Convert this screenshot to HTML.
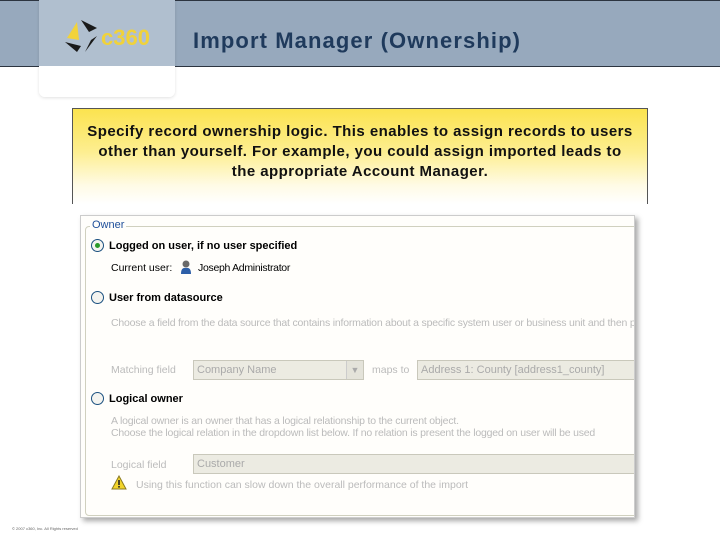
<!DOCTYPE html>
<html><head><meta charset="utf-8"><style>
*{margin:0;padding:0;box-sizing:border-box}
body{width:720px;height:540px;overflow:hidden;background:#fff;font-family:"Liberation Sans",sans-serif;position:relative}
.hdr{position:absolute;left:0;top:0;width:720px;height:67px;background:#97a9bd;border-bottom:1px solid #2c3440;border-top:1px solid #2c3440}
.logo{position:absolute;left:39px;top:0;width:136px;height:97px;border-radius:0 0 6px 6px;background:linear-gradient(#b0bfcf 0,#b0bfcf 66px,#fff 66px);box-shadow:0 1px 3px rgba(0,0,0,.12)}
.title{position:absolute;left:193px;top:28px;font-size:22px;letter-spacing:1.1px;font-weight:bold;color:#1f3a5c}
.yb{position:absolute;left:72px;top:108px;width:576px;height:96px;border:1px solid #555;border-bottom:none;background:linear-gradient(#fbe34f 0%,#fdee90 45%,#fffbe5 80%,#fff 100%);text-align:center;font-size:15px;font-weight:bold;line-height:20px;padding-top:13px;letter-spacing:.45px;color:#111}
.dlg{position:absolute;left:80px;top:215px;width:555px;height:303px;background:#fffefb;border:1px solid #ccc;box-shadow:3px 3px 5px rgba(0,0,0,.35);overflow:hidden;font-size:10.5px;color:#bbb}
.fs{position:absolute;left:4px;top:10px;width:560px;height:290px;border:1px solid #d0d0bf;border-radius:4px}
.lg{position:absolute;left:9px;top:3px;background:#fffefb;padding:0 2px;color:#1f4f9a;font-size:11px}
.a{position:absolute;white-space:nowrap}
.b{font-weight:bold;color:#000;font-size:11px}
.r{position:absolute;width:13px;height:13px;border-radius:50%;border:1px solid #1c5180;background:#f4f4f0}
.r.on::after{content:"";position:absolute;left:3px;top:3px;width:5px;height:5px;border-radius:50%;background:#2a9a2a}
.in{position:absolute;height:20px;background:#ecebe2;border:1px solid #c9c8bb;color:#aaa;padding:3px 3px;font-size:11px;white-space:nowrap}
</style></head><body>
<div class="hdr"></div>
<div class="logo">
<svg width="136" height="66" viewBox="0 0 136 66">
<polygon points="28,38 38,22 40,40" fill="#f2d33a"/>
<polygon points="42,20 58,28 50,32" fill="#1a1a1a"/>
<polygon points="26,42 38,52 42,46" fill="#1a1a1a"/>
<polygon points="58,36 46,52 52,40" fill="#1a1a1a"/>
<text x="62" y="45" font-family="Liberation Sans" font-size="22" font-weight="bold" fill="#f0d23a">c360</text>
</svg></div>
<div class="title">Import Manager (Ownership)</div>
<div class="yb">Specify record ownership logic. This enables to assign records to users<br>other than yourself. For example, you could assign imported leads to<br>the appropriate Account Manager.</div>
<div class="dlg">
<div class="fs"></div>
<div class="lg a">Owner</div>
<div class="r on" style="left:10px;top:23px"></div>
<div class="a b" style="left:28px;top:24px">Logged on user, if no user specified</div>
<div class="a" style="left:30px;top:46px;color:#000">Current user:</div>
<div class="a" style="left:99px;top:44px;width:12px;height:14px"><svg width="12" height="14"><circle cx="6" cy="4" r="3.5" fill="#6a6a6a"/><path d="M1 14 Q1 7 6 8 Q11 7 11 14Z" fill="#2d5fa8"/></svg></div>
<div class="a" style="left:117px;top:46px;color:#000;letter-spacing:-0.3px">Joseph Administrator</div>
<div class="r" style="left:10px;top:75px"></div>
<div class="a b" style="left:28px;top:76px">User from datasource</div>
<div class="a" style="left:30px;top:101px;letter-spacing:-0.2px">Choose a field from the data source that contains information about a specific system user or business unit and then pick</div>
<div class="a" style="left:30px;top:148px">Matching field</div>
<div class="in" style="left:112px;top:144px;width:171px">Company Name<span style="position:absolute;right:0;top:0;width:17px;height:18px;background:#e4e3da;border-left:1px solid #ccc;text-align:center;color:#aaa;font-size:9px;line-height:18px">▼</span></div>
<div class="a" style="left:291px;top:148px">maps to</div>
<div class="in" style="left:336px;top:144px;width:230px">Address 1: County [address1_county]</div>
<div class="r" style="left:10px;top:176px"></div>
<div class="a b" style="left:28px;top:177px">Logical owner</div>
<div class="a" style="left:30px;top:199px;letter-spacing:-0.2px">A logical owner is an owner that has a logical relationship to the current object.</div>
<div class="a" style="left:30px;top:211px;letter-spacing:-0.2px">Choose the logical relation in the dropdown list below. If no relation is present the logged on user will be used</div>
<div class="a" style="left:30px;top:243px">Logical field</div>
<div class="in" style="left:112px;top:238px;width:460px">Customer</div>
<div class="a" style="left:30px;top:259px"><svg width="16" height="15"><polygon points="8,1 15,14 1,14" fill="#f2d42a" stroke="#8a7a20"/><rect x="7.2" y="5" width="1.6" height="5" fill="#222"/><rect x="7.2" y="11" width="1.6" height="1.6" fill="#222"/></svg></div>
<div class="a" style="left:55px;top:263px">Using this function can slow down the overall performance of the import</div>
</div>
<div class="a" style="left:12px;top:526px;font-size:4px;color:#666">© 2007 c360, Inc. All Rights reserved</div>
</body></html>
